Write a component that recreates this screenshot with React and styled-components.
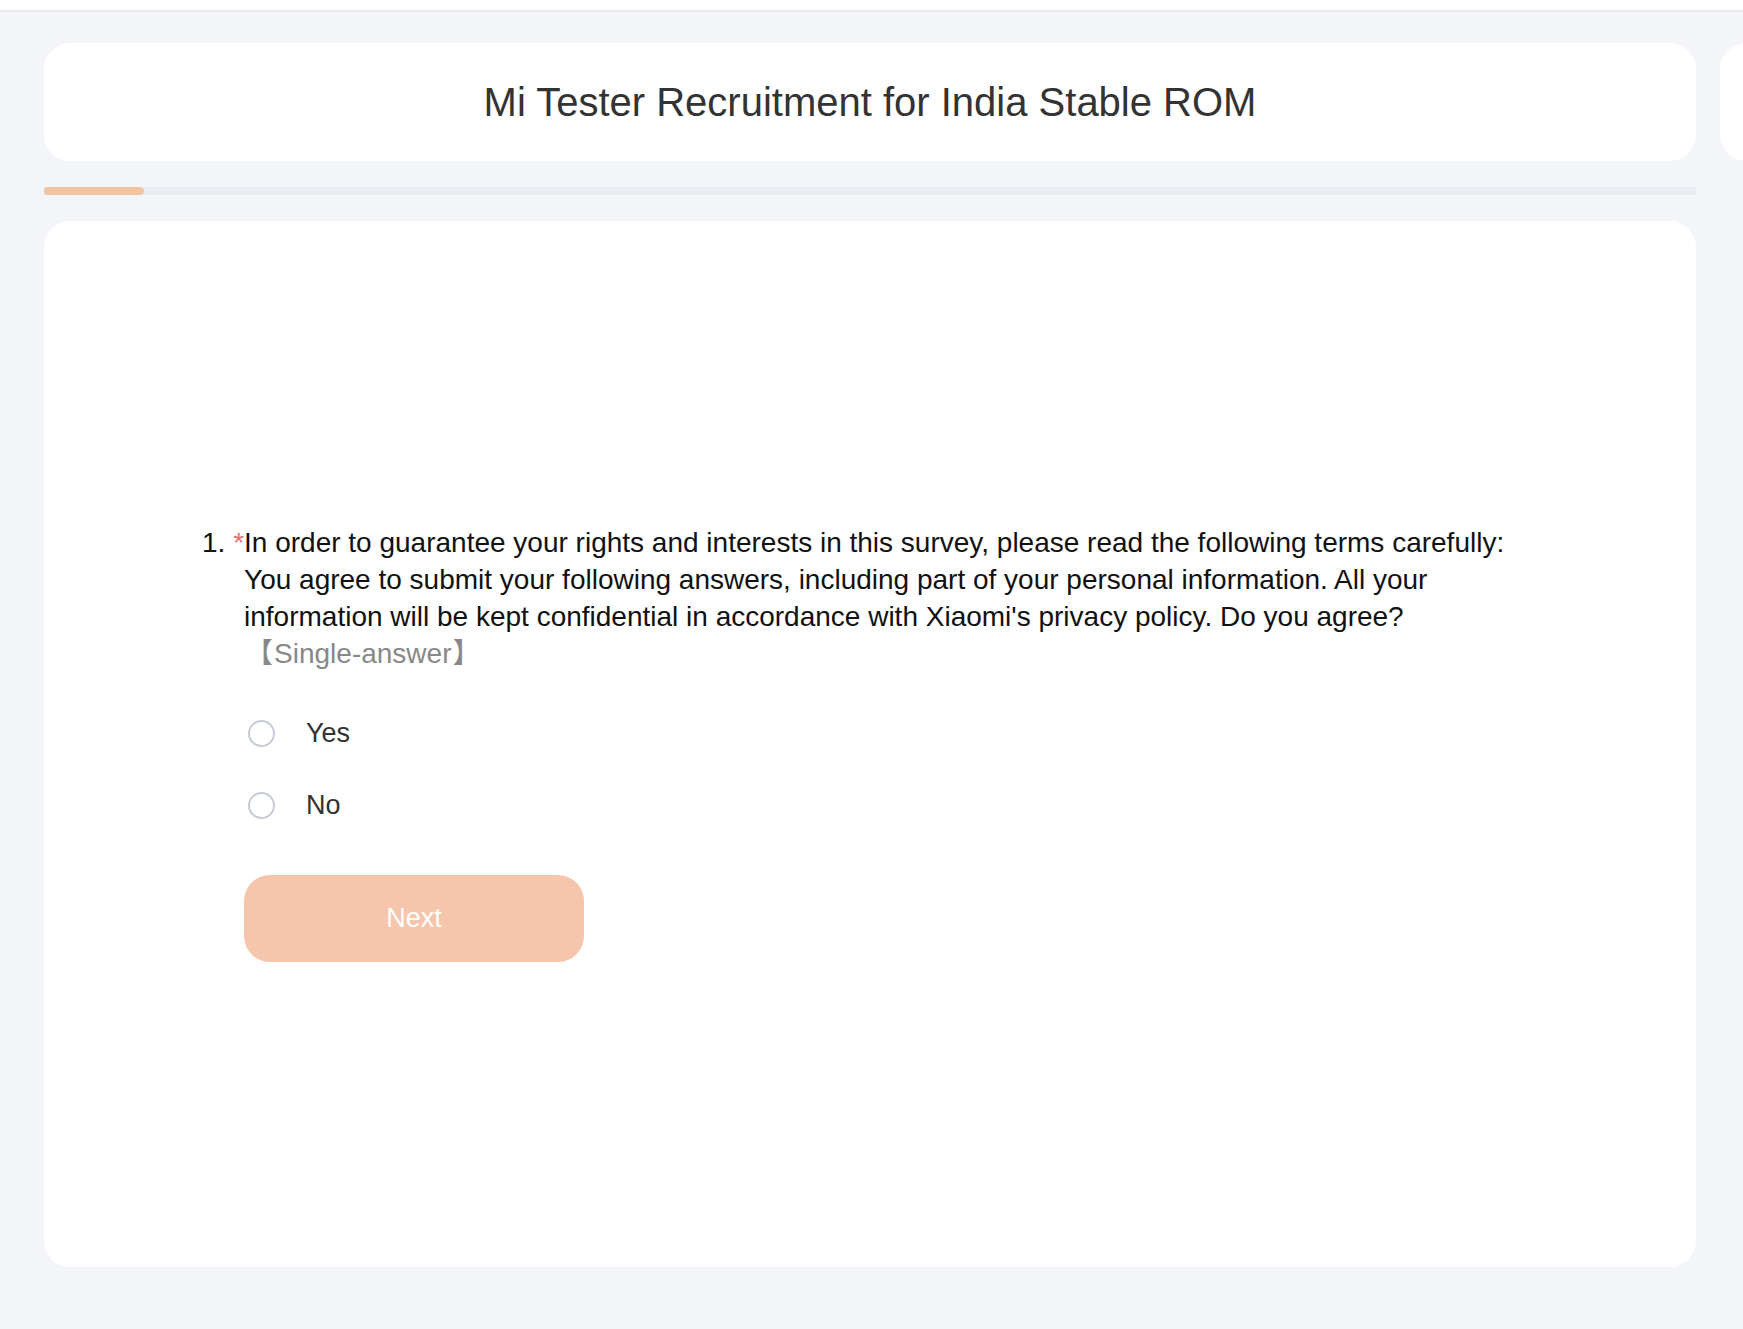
import React from 'react';
import styled, { createGlobalStyle } from 'styled-components';

const GlobalStyle = createGlobalStyle`
  html, body {
    margin:           0;
    padding:          0;
    background:       #f4f5f9;
    font-family:      "Liberation Sans", Arial, sans-serif;
    overflow:         hidden;
  }
`

const TopStrip = styled.div`
  height:           10px;
  background:       #ffffff;
  border-bottom:    2px solid #e8e9ee;
`

const Page = styled.div`
  width:            1743px;
  height:           1317px;
  padding:          31px 0 0 44px;
  box-sizing:       border-box;
  overflow:         hidden;
`

const HeaderRow = styled.div`
  display:          flex;
  flex-direction:   row;
  gap:              24px;
  width:            1800px;
`

const HeaderCard = styled.div`
  flex:             0 0 ${p => p.width}px;
  height:           118px;
  background:       #ffffff;
  border-radius:    26px;
  display:          flex;
  align-items:      center;
  justify-content:  center;
`

const Title = styled.h1`
  margin:           0;
  font-size:        40px;
  font-weight:      400;
  color:            #333333;
`

const Track = styled.div`
  width:            1652px;
  height:           8px;
  margin-top:       26px;
  background:       #ecedf2;
`

const Fill = styled.div`
  height:           100%;
  background:       #f0c4a0;
  border-radius:    4px;
`

const MainCard = styled.div`
  width:            1652px;
  height:           1046px;
  margin-top:       26px;
  background:       #ffffff;
  border-radius:    26px;
  padding:          303px 161px 0 158px;
  box-sizing:       border-box;
`

const Question = styled.div`
  display:          flex;
  flex-direction:   row;
  font-size:        28px;
  line-height:      37px;
  color:            #111111;
`

const Num = styled.span`
  white-space:      pre;
`

const Star = styled.span`
  color:            #ea6f6f;
`

const Body = styled.div`
  flex:             1;
`

const Hint = styled.div`
  color:            #888888;
  font-family:      "Liberation Sans", "Noto Sans CJK SC", sans-serif;
  margin-left:      0;
`

const Bracket = styled.span`
  padding:          0 1px;
`

const Options = styled.div`
  display:          flex;
  flex-direction:   column;
  margin:           25px 0 0 46px;
`

const Option = styled.label`
  display:          flex;
  align-items:      center;
  height:           72px;
  gap:              31px;
  font-size:        27px;
  color:            #333333;
  cursor:           pointer;
`

const Radio = styled.span`
  width:            23px;
  height:           23px;
  border:           2px solid #c6cbd6;
  border-radius:    50%;
  flex:             0 0 auto;
`

const NextButton = styled.button`
  margin:           34px 0 0 42px;
  width:            340px;
  height:           87px;
  border:           none;
  border-radius:    26px;
  background:       #f5c6ac;
  color:            #ffffff;
  font-family:      "Liberation Sans", Arial, sans-serif;
  font-size:        27px;
  cursor:           pointer;
`

const answers = ['Yes', 'No']
const progress = 100 / 1652

export default function App() {
  return (
    <>
      <GlobalStyle />
      <TopStrip />
      <Page>
        <HeaderRow>
          <HeaderCard width={1652}>
            <Title>Mi Tester Recruitment for India Stable ROM</Title>
          </HeaderCard>
          <HeaderCard width={200} />
        </HeaderRow>
        <Track>
          <Fill style={{ width: `${progress * 100}%` }} />
        </Track>
        <MainCard>
          <Question>
            <Num>1. </Num>
            <Star>*</Star>
            <Body>
              In order to guarantee your rights and interests in this survey, please read the following terms carefully: You agree to submit your following answers, including part of your personal information. All your information will be kept confidential in accordance with Xiaomi's privacy policy. Do you agree?
              <Hint><Bracket>【</Bracket>Single-answer<Bracket>】</Bracket></Hint>
            </Body>
          </Question>
          <Options>
            {answers.map(a => (
              <Option key={a}>
                <Radio />
                {a}
              </Option>
            ))}
          </Options>
          <NextButton>Next</NextButton>
        </MainCard>
      </Page>
    </>
  );
}
